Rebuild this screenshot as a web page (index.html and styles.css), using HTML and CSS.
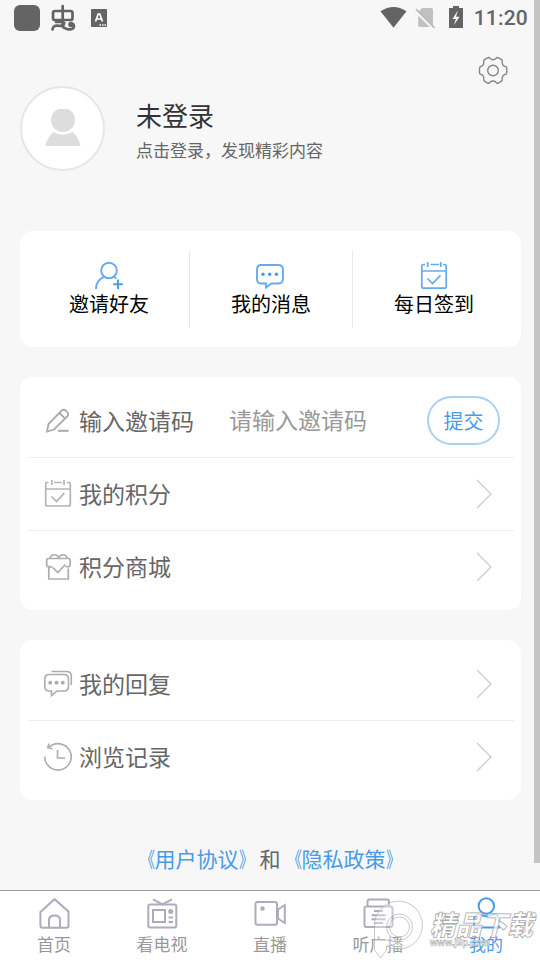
FILE: index.html
```html
<!DOCTYPE html>
<html lang="zh-CN">
<head>
<meta charset="utf-8">
<title>我的</title>
<link rel="stylesheet" href="styles.css">
</head>
<body>
<div class="app">
  <header class="status">
    <svg width="120" height="36" viewBox="0 0 120 36">
      <rect x="14" y="5" width="26" height="26" rx="6" fill="#646464"/>
      <g fill="none" stroke="#646464" stroke-width="2.700" stroke-linecap="round">
        <rect x="53" y="11" width="19.500" height="9" rx="2"/>
        <path d="M62.700 6v17M56 22h6.500q3 .5 1 3c-3 2.500-6.500-1-9.500 1.500q-1.300 1-1.500 3M62 25c2 5 11 6 12 1.500q0-3-3-3"/>
      </g>
      <circle cx="71" cy="24.500" r="2.800" fill="#646464"/>
      <rect x="91" y="9" width="16" height="18" rx="1" fill="#646464"/>
      <path d="M95.500 21.500 98.200 14h1.600l2.700 7.500M96.800 19h4.400" fill="none" stroke="#fff" stroke-width="1.700"/>
      <path d="M99.500 25h1.500m1 0h1.500m1 0h1.500" stroke="#fff" stroke-width="1.500"/>
    </svg>
    <div class="status-right">
      <svg width="90" height="36" viewBox="380 0 90 36">
        <path d="M380.500 11.200q13-8.500 26 0L393.500 27.800z" fill="#646464"/>
        <path d="M422 8h9.500q1.500 0 1.500 1.500V25q0 2-1.500 2H420q-1.800 0-1.800-2V12z" fill="#c0c0c0"/>
        <path d="M415.200 10.600 433.500 29" stroke="#f7f7f7" stroke-width="2.500"/>
        <path d="M416 9.200 434.500 27.800" stroke="#bbb" stroke-width="1.800"/>
        <path d="M453 6h6v2h4v20h-14V8h4z" fill="#646464"/>
        <path d="m457.500 11-5 8h3.300l-1.800 6 5.500-8.200H456l1.800-5.800z" fill="#f7f7f7"/>
      </svg>
      <span class="clock">11:20</span>
    </div>
  </header>

  <div class="toolbar">
    <svg width="30" height="30" viewBox="478 55 30 30" fill="none" stroke="#858585" stroke-width="1.400">
      <path d="M487.500 57.800q1.500-.7 2.500.7 3 2.500 6 0 1-1.400 2.500-.7l3 1.800q1 .8.700 2.300 0 4 3.300 4.500 1.300.5 1.300 2v4q0 1.500-1.300 2-3.300.6-3.300 4.500.3 1.500-.7 2.300l-3 1.800q-1.500.7-2.500-.7-3-2.500-6 0-1 1.400-2.500.7l-3-1.800q-1-.8-.7-2.300 0-3.900-3-4.500-1.300-.5-1.300-2v-4q0-1.500 1.300-2 3-.5 3-4.500-.3-1.500.7-2.300z"/>
      <circle cx="493" cy="70.500" r="5.300"/>
    </svg>
  </div>

  <section class="profile">
    <div class="avatar">
      <svg width="36" height="40" viewBox="0 1.500 36 40" fill="#ddd">
        <circle cx="18" cy="12.500" r="12"/>
        <path d="M8.500 24.500q9.500 5.500 19 0Q34 30 35.600 38.500H.4Q2 30 8.500 24.500z"/>
      </svg>
    </div>
    <div class="who">
      <div class="name">未登录</div>
      <div class="hint">点击登录，发现精彩内容</div>
    </div>
  </section>

  <section class="card quick">
    <div class="quick-item">
      <svg width="30" height="30" viewBox="94 260 30 30" fill="none" stroke="#65aaf0" stroke-width="1.900">
        <circle cx="109" cy="270.500" r="7.800"/><path d="M96 289c0-6 3-10 8.500-12.300M113 276.500l3.500 2"/><path d="M118 279.500v9.500m-4.800-4.700h9.600" stroke="#479be9" stroke-width="2.100"/>
      </svg>
      <span>邀请好友</span>
    </div>
    <div class="quick-item">
      <svg width="30" height="30" viewBox="256 260 30 30" fill="none" stroke="#65aaf0" stroke-width="1.900">
        <path d="M261 265h17q5 0 5 5v9q0 4.500-5 4.500h-6.500l-5.500 4v-4h-5q-4 0-4-4.500v-9q0-5 4-5z"/>
        <g fill="#479be9" stroke="none"><circle cx="263" cy="274.200" r="1.700"/><circle cx="269.700" cy="274.200" r="1.700"/><circle cx="276.400" cy="274.200" r="1.700"/></g>
      </svg>
      <span>我的消息</span>
    </div>
    <div class="quick-item">
      <svg width="30" height="30" viewBox="419 260 30 30" fill="none" stroke="#65aaf0" stroke-width="1.700">
        <path d="M425 264.500h-1.500q-1.700 0-1.700 2v20q0 1.700 1.700 1.700h21q1.700 0 1.700-1.700v-20q0-2-1.700-2H443M430.500 264.500h8.500M427.700 262v5M440.800 262v5M422 271h24M427.500 278.500l5 5 8-8.200"/>
      </svg>
      <span>每日签到</span>
    </div>
  </section>

  <section class="card list">
    <div class="row">
      <svg class="ico" width="30" height="30" viewBox="43 406 30 30" fill="none" stroke="#aaa" stroke-width="1.800">
        <path d="m47 431.500 1.500-7.500 13.200-13.500q2-1.500 4 0l1.800 2q1.500 2-.2 4L54 429.500zM59.500 413l5.500 5.500"/><path d="M58 430.800h10.500" stroke-width="2"/>
      </svg>
      <span class="label">输入邀请码</span>
      <span class="placeholder">请输入邀请码</span>
      <span class="submit">提交</span>
    </div>
    <div class="row">
      <svg class="ico" width="30" height="30" viewBox="43 479 30 30" fill="none" stroke="#b4b4b4" stroke-width="1.700">
        <path d="M48.500 482.500H47q-1.300 0-1.300 1.600V504q0 2 1.600 2h21.200q1.800 0 1.800-2v-20q0-1.500-1.500-1.500H67M54 482.500h8M51.800 480v5M64 480v5M46 489h24M51.500 496.500l5 5 7.800-8.300"/>
      </svg>
      <span class="label">我的积分</span>
      <svg class="go" width="18" height="30" viewBox="0 0 18 30"><path d="m2 1 14 14L2 29"/></svg>
    </div>
    <div class="row">
      <svg class="ico" width="30" height="30" viewBox="43 552 30 30" fill="none" stroke="#adadad" stroke-width="1.700">
        <path d="M52.500 567h-2.700v-.3H48.500q-1.800 0-1.800-1.700v-5q0-1.500 1.500-1.500h20.500q1.500 0 1.500 1.500v5q0 1.700-1.500 1.700H65.500M48.800 567v12h19.500V568.500M50 558.500c1-5 7.500-5 8.700 0 1.200-5 7.500-5 8.500 0M52.800 567.500l5 5 7.500-8"/>
      </svg>
      <span class="label">积分商城</span>
      <svg class="go" width="18" height="30" viewBox="0 0 18 30"><path d="m2 1 14 14L2 29"/></svg>
    </div>
  </section>

  <section class="card list short">
    <div class="row">
      <svg class="ico" width="30" height="30" viewBox="43 669 30 30" fill="none" stroke="#adadad" stroke-width="1.600">
        <path d="M49 674.500h15q4.500 0 4.500 4.500v7.500q0 4.500-4.500 4.500h-7l-5.500 4.500V691H49q-4.200 0-4.200-4.500V679q0-4.500 4.200-4.500zM51.500 671.500H66.500q4.800 0 4.800 4.500v9"/>
        <g fill="#aaa" stroke="none"><circle cx="50.200" cy="682.700" r="1.900"/><circle cx="56.500" cy="682.700" r="1.900"/><circle cx="62.800" cy="682.700" r="1.900"/></g>
      </svg>
      <span class="label">我的回复</span>
      <svg class="go" width="18" height="30" viewBox="0 0 18 30"><path d="m2 1 14 14L2 29"/></svg>
    </div>
    <div class="row">
      <svg class="ico" width="30" height="30" viewBox="43 742 30 30" fill="none" stroke="#adadad" stroke-width="1.600">
        <path d="M44.800 756.500A13.200 13.200 0 1 0 49 747.200M49 743.500l-1.200 4.200 4.700 1M57.500 750v8h7.500"/>
      </svg>
      <span class="label">浏览记录</span>
      <svg class="go" width="18" height="30" viewBox="0 0 18 30"><path d="m2 1 14 14L2 29"/></svg>
    </div>
  </section>

  <div class="terms"><a><span class="open">《</span>用户协议<span class="close">》</span></a>和<a><span class="open">《</span>隐私政策<span class="close">》</span></a></div>

  <nav class="tabs">
    <div class="tab">
      <svg width="34" height="34" viewBox="37 896 34 34">
        <path d="M41 911.500 54.500 899.200 68.500 911.500V925.500q0 2.200-2.200 2.200H42.600q-2.200 0-2.200-2.200V912zM49 927.500V920q0-4.500 5.500-4.500t5.500 4.500v7.500"/>
      </svg>
      <span>首页</span>
    </div>
    <div class="tab">
      <svg width="34" height="34" viewBox="145 896 34 34">
        <rect x="148.300" y="904.500" width="28" height="23" rx="2"/><rect x="153" y="910" width="12" height="12"/>
        <path d="m153 899.300 9.500 5 9.500-5M168.500 917.500h4.500M168.500 922h4.500"/><circle cx="170.700" cy="911.500" r="1.500" fill="#abadbd"/>
      </svg>
      <span>看电视</span>
    </div>
    <div class="tab">
      <svg width="34" height="34" viewBox="253 896 34 34">
        <rect x="255.500" y="902" width="21.500" height="22.800" rx="2"/><path d="m278 909.500 6.800-4.500v18L278 918.500z"/><circle cx="262.500" cy="908.500" r="1.300" fill="#abadbd"/>
      </svg>
      <span>直播</span>
    </div>
    <div class="tab">
      <svg width="34" height="34" viewBox="361 896 34 34">
        <path d="M367.500 906v-4.500q0-2 2-2h17.500q2 0 2 2v4.500"/><rect x="364.500" y="906.500" width="28" height="20.500" rx="2"/>
        <path d="M374 911h9M371.500 915.300h14M371.500 919.300h14M374 923h9"/>
      </svg>
      <span>听广播</span>
    </div>
    <div class="tab active">
      <svg width="34" height="34" viewBox="469 896 34 34">
        <circle cx="486.300" cy="906" r="7.700"/><path d="M478.500 914q-4.500 1-4.500 6v7.500h25V920q0-5-4.500-6M478.500 914q7.800 4.500 16 0"/>
      </svg>
      <span>我的</span>
    </div>
  </nav>

  <svg class="watermark" width="172" height="64" viewBox="368 896 172 64">
    <g fill="#fff" fill-opacity=".35" stroke="#aaa" stroke-opacity=".8" stroke-width=".8">
      <path fill-rule="evenodd" d="M374.500 950V927a24 24 0 1 1 12 19v4l-6 8zM386.500 927a13 13 0 1 0 26 0a13 13 0 1 0-26 0z"/>
      <circle cx="399.500" cy="927" r="10"/>
      <path d="M374.500 940h12" fill="none"/>
    </g>
    <text class="wm-name" x="430" y="934.500" textLength="103" lengthAdjust="spacingAndGlyphs">精品下载</text>
    <text class="wm-url" x="430" y="946" textLength="60" lengthAdjust="spacingAndGlyphs">www.j9p.com</text>
  </svg>
  <div class="scrollbar"></div>
</div>
</body>
</html>
```
FILE: styles.css
```css
* { box-sizing: border-box; }
body {
  margin: 0;
  background: #f7f7f7;
  font-family: "Noto Sans CJK SC", sans-serif;
}
svg { display: block; flex: none; }
.app {
  position: relative;
  width: 540px;
  height: 960px;
  overflow: hidden;
  display: flex;
  flex-direction: column;
}
.status {
  height: 36px;
  flex: none;
  display: flex;
  justify-content: space-between;
}
.status-right { display: flex; align-items: center; padding-right: 12px; }
.clock {
  width: 58px;
  white-space: nowrap;
  font: 500 21px/38px Roboto, sans-serif;
  letter-spacing: .2px;
  color: #646464;
  display: flex;
  justify-content: flex-end;
}
.toolbar {
  height: 50px;
  flex: none;
  display: flex;
  justify-content: flex-end;
  padding: 19px 32px 0 0;
}
.profile { height: 85px; flex: none; display: flex; padding-left: 20px; }
.avatar {
  width: 85px;
  height: 85px;
  border: 2px solid #e6e6e6;
  border-radius: 50%;
  background: #fff;
  display: flex;
  align-items: center;
  justify-content: center;
}
.who { margin-left: 31px; padding-top: 10px; }
.name { font-size: 26px; line-height: 38px; color: #333; }
.hint { font-size: 17px; line-height: 26px; margin-top: 3px; color: #666; }
.card {
  width: 501px;
  margin-left: 20px;
  background: #fff;
  border-radius: 13px;
  flex: none;
}
.quick { height: 116px; margin-top: 60px; padding: 20px 6px 19px; display: flex; }
.quick-item {
  flex: 1 1 0;
  display: flex;
  flex-direction: column;
  align-items: center;
  padding-top: 9px;
  font-size: 20px;
  line-height: 28px;
  color: #000;
}
.quick-item:first-child { padding-left: 3px; flex-basis: 0; }
.quick-item + .quick-item { border-left: 1px solid #e8e8e8; }
.quick-item { min-width: 163px; max-width: 163px; }
.list { height: 233px; margin-top: 30px; padding: 8px 7px 0 8px; }
.short { height: 160px; }
.row {
  height: 73px;
  display: flex;
  align-items: center;
  padding: 0 21px 0 15px;
  font-size: 23px;
  color: #666;
  border-bottom: 1px solid #eee;
}
.row:last-child { border-bottom-color: transparent; }
.label { margin: -2px 0 0 6px; white-space: nowrap; }
.placeholder { margin: -4px 0 0 35px; color: #999; white-space: nowrap; }
.submit {
  width: 73px;
  height: 49px;
  margin: -1px -7px 0 auto;
  border: 2px solid #a9d0f7;
  border-radius: 25px;
  font-size: 20px;
  line-height: 45px;
  text-align: center;
  color: #479be9;
}
.go { margin-left: auto; fill: none; stroke: #ccc; stroke-width: 1.3; }
.terms {
  margin-top: 42px;
  height: 32px;
  line-height: 32px;
  text-align: center;
  font-size: 21px;
  color: #666;
}
.terms a { color: #479be9; }
.open, .close { display: inline-block; width: 21px; }
.open { transform: scaleX(.7); transform-origin: right; }
.close { transform: scaleX(.7); transform-origin: left; }
.tabs {
  height: 70px;
  margin-top: auto;
  border-top: 1px solid #999;
  background: #fff;
  display: flex;
  flex: none;
}
.tab {
  flex: 1;
  padding-top: 5px;
  display: flex;
  flex-direction: column;
  align-items: center;
  font-size: 17px;
  line-height: 28px;
  color: #999;
}
.tab svg { fill: none; stroke: #abadbd; stroke-width: 2; }
.active { color: #479be9; }
.active svg { stroke: #479be9; }
.watermark { position: absolute; left: 368px; top: 896px; }
.wm-name {
  font-size: 27px;
  font-weight: 900;
  font-style: italic;
  fill: rgba(255, 255, 255, .75);
  stroke: #aaa;
  stroke-width: .8;
}
.wm-url {
  font: bold 11px "Liberation Sans", sans-serif;
  fill: rgba(255, 255, 255, .8);
  stroke: #aaa;
  stroke-width: .6;
}
.scrollbar {
  position: absolute;
  right: 0;
  top: 0;
  width: 6px;
  height: 863px;
  background: #c4c4c4;
}
```
